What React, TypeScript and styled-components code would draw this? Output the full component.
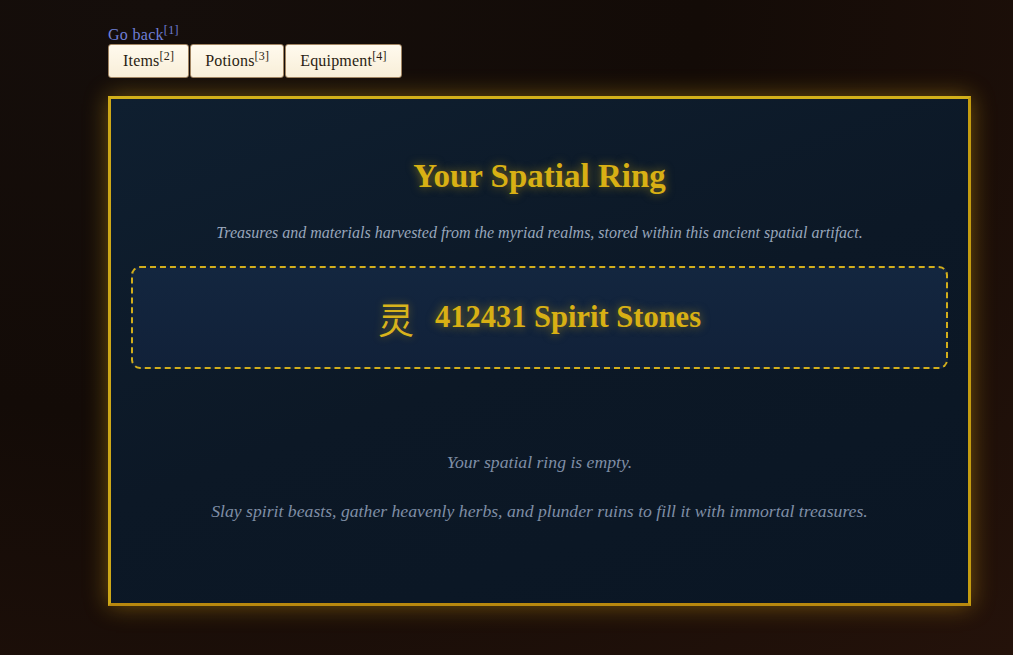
import React from "react";
import styled, { createGlobalStyle } from "styled-components";

const serif = `"Liberation Serif", "DejaVu Serif", "Noto Sans CJK SC", serif`;

const GlobalStyle = createGlobalStyle`
  html, body {
    margin: 0;
    padding: 0;
    height: 100%;
  }
  body {
    font-family: ${serif};
    background: radial-gradient(ellipse at 15% 0%, #150e0b 0%, #130b07 45%, #24120a 100%);
    background-color: #160c08;
    min-height: 655px;
  }
`;

const Page = styled.div({
  padding: "24px 42px 0 108px",
  minHeight: "655px",
  boxSizing: "border-box",
});

const BackLink = styled.a({
  display: "block",
  width: "fit-content",
  height: "18px",
  color: "#6f7fd6",
  fontSize: "16px",
  letterSpacing: "0.3px",
  textDecoration: "none",
  lineHeight: "22px",
  sup: {
    fontSize: "12px",
    lineHeight: 0,
  },
});

const TabRow = styled.div({
  display: "flex",
  gap: "1px",
  marginTop: "2px",
});

const TabButton = styled.button({
  fontFamily: serif,
  fontSize: "16px",
  letterSpacing: "0.2px",
  color: "#2a1d12",
  background: "linear-gradient(#fffaee, #f8eed8)",
  border: "1px solid #a08462",
  borderRadius: "3px",
  padding: "0 14px",
  height: "34px",
  cursor: "pointer",
  sup: {
    fontSize: "12px",
    lineHeight: 0,
  },
});

const Panel = styled.section({
  marginTop: "18px",
  border: "3px solid",
  borderColor: "#d2b01a #c49c10 #b8880e #cda818",
  background: "linear-gradient(160deg, #0f1f30 0%, #0c1826 50%, #0a1624 100%)",
  boxShadow: "0 0 22px rgba(212, 160, 20, 0.45)",
  height: "510px",
  boxSizing: "border-box",
  padding: "57px 20px 0",
  textAlign: "center",
});

const Title = styled.h1({
  margin: 0,
  fontSize: "33px",
  fontWeight: 700,
  color: "#d8b014",
  textShadow: "0 0 10px rgba(214, 173, 18, 0.55)",
  lineHeight: "40px",
});

const Subtitle = styled.p({
  margin: "27px 0 0",
  fontStyle: "italic",
  fontSize: "16px",
  color: "#98a6bb",
  lineHeight: "20px",
});

const StoneBox = styled.div({
  margin: "23px 0 0",
  height: "103px",
  boxSizing: "border-box",
  border: "2px dashed #d2ae1c",
  borderRadius: "9px",
  background: "linear-gradient(180deg, #13263f 0%, #112139 100%)",
  display: "flex",
  alignItems: "center",
  justifyContent: "center",
  gap: "21px",
});

const StoneGlyph = styled.span({
  fontFamily: `"Noto Sans CJK SC", sans-serif`,
  fontSize: "36px",
  color: "#d8b31c",
  textShadow: "0 0 8px rgba(214, 173, 18, 0.4)",
});

const StoneCount = styled.span({
  fontSize: "30.5px",
  fontWeight: 700,
  color: "#d8b014",
  textShadow: "0 0 10px rgba(214, 173, 18, 0.55)",
});

const EmptyNote = styled.p<{ gap: number }>(({ gap }) => ({
  margin: `${gap}px 0 0`,
  fontStyle: "italic",
  fontSize: "17.7px",
  color: "#7f8ea5",
  lineHeight: "22px",
}));

export default function App() {
  return (
    <>
      <GlobalStyle />
      <Page>
        <BackLink href="#">
          Go back<sup>[1]</sup>
        </BackLink>
        <TabRow>
          <TabButton>
            Items<sup>[2]</sup>
          </TabButton>
          <TabButton>
            Potions<sup>[3]</sup>
          </TabButton>
          <TabButton>
            Equipment<sup>[4]</sup>
          </TabButton>
        </TabRow>
        <Panel>
          <Title>Your Spatial Ring</Title>
          <Subtitle>
            Treasures and materials harvested from the myriad realms, stored
            within this ancient spatial artifact.
          </Subtitle>
          <StoneBox>
            <StoneGlyph>灵</StoneGlyph>
            <StoneCount>412431 Spirit Stones</StoneCount>
          </StoneBox>
          <EmptyNote gap={82}>Your spatial ring is empty.</EmptyNote>
          <EmptyNote gap={27}>
            Slay spirit beasts, gather heavenly herbs, and plunder ruins to
            fill it with immortal treasures.
          </EmptyNote>
        </Panel>
      </Page>
    </>
  );
}
